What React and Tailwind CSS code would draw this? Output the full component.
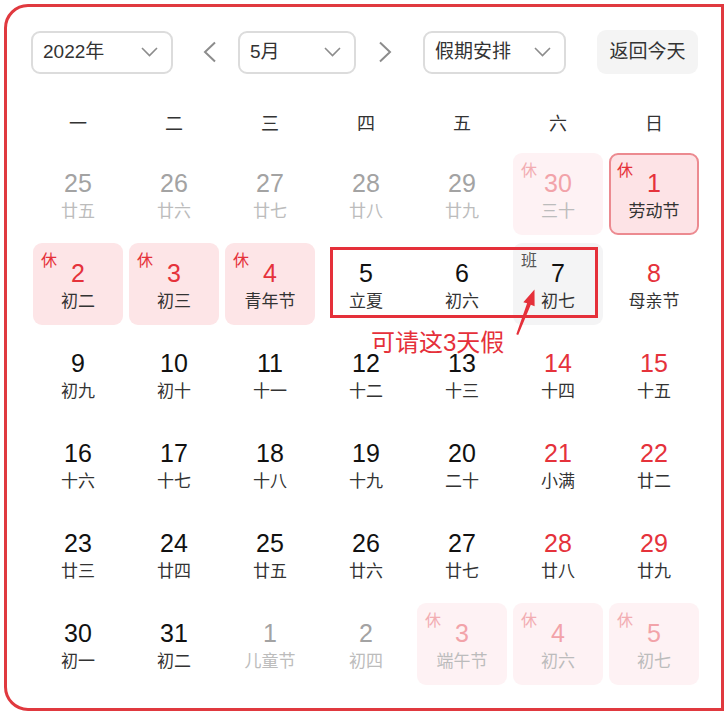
import React from 'react';

const FONT = "font-['Liberation_Sans','Noto_Sans_CJK_SC',sans-serif]";

// t: other | normal | weekend | holiday | selected | otherHoliday | work
const rows = [
  [
    { d: 25, l: '廿五', t: 'other' },
    { d: 26, l: '廿六', t: 'other' },
    { d: 27, l: '廿七', t: 'other' },
    { d: 28, l: '廿八', t: 'other' },
    { d: 29, l: '廿九', t: 'other' },
    { d: 30, l: '三十', t: 'otherHoliday' },
    { d: 1, l: '劳动节', t: 'selected' },
  ],
  [
    { d: 2, l: '初二', t: 'holiday' },
    { d: 3, l: '初三', t: 'holiday' },
    { d: 4, l: '青年节', t: 'holiday' },
    { d: 5, l: '立夏', t: 'normal' },
    { d: 6, l: '初六', t: 'normal' },
    { d: 7, l: '初七', t: 'work' },
    { d: 8, l: '母亲节', t: 'weekend' },
  ],
  [
    { d: 9, l: '初九', t: 'normal' },
    { d: 10, l: '初十', t: 'normal' },
    { d: 11, l: '十一', t: 'normal' },
    { d: 12, l: '十二', t: 'normal' },
    { d: 13, l: '十三', t: 'normal' },
    { d: 14, l: '十四', t: 'weekend' },
    { d: 15, l: '十五', t: 'weekend' },
  ],
  [
    { d: 16, l: '十六', t: 'normal' },
    { d: 17, l: '十七', t: 'normal' },
    { d: 18, l: '十八', t: 'normal' },
    { d: 19, l: '十九', t: 'normal' },
    { d: 20, l: '二十', t: 'normal' },
    { d: 21, l: '小满', t: 'weekend' },
    { d: 22, l: '廿二', t: 'weekend' },
  ],
  [
    { d: 23, l: '廿三', t: 'normal' },
    { d: 24, l: '廿四', t: 'normal' },
    { d: 25, l: '廿五', t: 'normal' },
    { d: 26, l: '廿六', t: 'normal' },
    { d: 27, l: '廿七', t: 'normal' },
    { d: 28, l: '廿八', t: 'weekend' },
    { d: 29, l: '廿九', t: 'weekend' },
  ],
  [
    { d: 30, l: '初一', t: 'normal' },
    { d: 31, l: '初二', t: 'normal' },
    { d: 1, l: '儿童节', t: 'other' },
    { d: 2, l: '初四', t: 'other' },
    { d: 3, l: '端午节', t: 'otherHoliday' },
    { d: 4, l: '初六', t: 'otherHoliday' },
    { d: 5, l: '初七', t: 'otherHoliday' },
  ],
];

const styles = {
  other: { box: '', num: 'text-[#a3a3a3]', lunar: 'text-[#bcbcbc]' },
  normal: { box: '', num: 'text-[#111111]', lunar: 'text-[#333333]' },
  weekend: { box: '', num: 'text-[#e5323b]', lunar: 'text-[#333333]' },
  holiday: { box: 'bg-[#fde5e7]', num: 'text-[#e5323b]', lunar: 'text-[#333333]', tag: '休', tagColor: 'text-[#e5323b]' },
  selected: { box: 'bg-[#fde3e6] border-2 border-[#ec8a90]', num: 'text-[#e5323b]', lunar: 'text-[#333333]', tag: '休', tagColor: 'text-[#e5323b]' },
  otherHoliday: { box: 'bg-[#fef2f4]', num: 'text-[#f2a3a9]', lunar: 'text-[#bcbcbc]', tag: '休', tagColor: 'text-[#f2adb2]' },
  work: { box: 'bg-[#f4f4f5]', num: 'text-[#111111]', lunar: 'text-[#333333]', tag: '班', tagColor: 'text-[#555555]' },
};

function Chevron() {
  return (
    <svg width="17" height="10" viewBox="0 0 17 10" className="shrink-0">
      <polyline points="1,1 8.5,8.5 16,1" fill="none" stroke="#8c8c8c" strokeWidth="1.6" />
    </svg>
  );
}

function Select({ label, width }) {
  return (
    <div
      className={`flex items-center justify-between h-[43px] ${width} rounded-[9px] border-2 border-[#dcdcdc] bg-white pl-[10px] pr-[13px] text-[19px] text-[#333]`}
    >
      <span>{label}</span>
      <Chevron />
    </div>
  );
}

function Cell({ c }) {
  const s = styles[c.t];
  const sel = c.t === 'selected';
  return (
    <div className="h-[90px] px-[3px] pt-[4px]">
      <div
        className={`relative flex flex-col items-center h-[82px] rounded-[9px] ${s.box} ${sel ? 'pt-[14px]' : 'pt-[16px]'}`}
      >
        {s.tag && (
          <span className={`absolute ${sel ? 'left-[6px] top-[7px]' : 'left-[8px] top-[9px]'} text-[16px] leading-[18px] ${s.tagColor}`}>
            {s.tag}
          </span>
        )}
        <span className={`text-[25px] leading-[28px] ${s.num}`}>{c.d}</span>
        <span className={`mt-[5px] text-[17px] leading-[20px] ${s.lunar}`}>{c.l}</span>
      </div>
    </div>
  );
}

export default function App() {
  return (
    <div className={`relative w-[728px] h-[716px] bg-white ${FONT}`}>
      <div className="ml-[4px] pt-[4px]">
        <div className="w-[720px] h-[707px] border-[3px] border-[#e0393f] rounded-l-[24px] pl-[23px] pt-[23px]">
          {/* toolbar */}
          <div className="flex items-center ml-[1px]">
            <Select label="2022年" width="w-[142px]" />
            <svg width="14" height="22" viewBox="0 0 14 22" className="ml-[30px]">
              <polyline points="12,1.5 2,11 12,20.5" fill="none" stroke="#8c8c8c" strokeWidth="2" />
            </svg>
            <div className="ml-[21px]">
              <Select label="5月" width="w-[118px]" />
            </div>
            <svg width="14" height="22" viewBox="0 0 14 22" className="ml-[22px]">
              <polyline points="2,1.5 12,11 2,20.5" fill="none" stroke="#8c8c8c" strokeWidth="2" />
            </svg>
            <div className="ml-[31px]">
              <Select label="假期安排" width="w-[143px]" />
            </div>
            <button className="ml-[31px] h-[44px] w-[101px] rounded-[9px] bg-[#f4f4f4] text-[19px] text-[#333]">
              返回今天
            </button>
          </div>

          {/* weekdays */}
          <div className="grid grid-cols-7 w-[672px] mt-[25px] h-[50px] items-center">
            {['一', '二', '三', '四', '五', '六', '日'].map((w) => (
              <div key={w} className="text-center text-[18px] text-[#333]">
                {w}
              </div>
            ))}
          </div>

          {/* days */}
          <div className="grid grid-cols-7 w-[672px]">
            {rows.flat().map((c, i) => (
              <Cell key={i} c={c} />
            ))}
          </div>
        </div>
      </div>

      {/* annotation */}
      <div className="absolute left-[330px] top-[247px] w-[268px] h-[71px] border-[3px] border-[#e5303a]" />
      <div className="absolute left-[371px] top-[328px] text-[24px] leading-[30px] text-[#e5303a]">
        可请这3天假
      </div>
      <svg className="absolute left-[510px] top-[284px]" width="30" height="56" viewBox="510 284 30 56">
        <polygon
          points="516.3,334.2 527.1,303.3 523.3,302.2 534.5,289.5 534.6,306.3 530.8,304.8 518.2,335"
          fill="#e5303a"
        />
      </svg>
    </div>
  );
}
